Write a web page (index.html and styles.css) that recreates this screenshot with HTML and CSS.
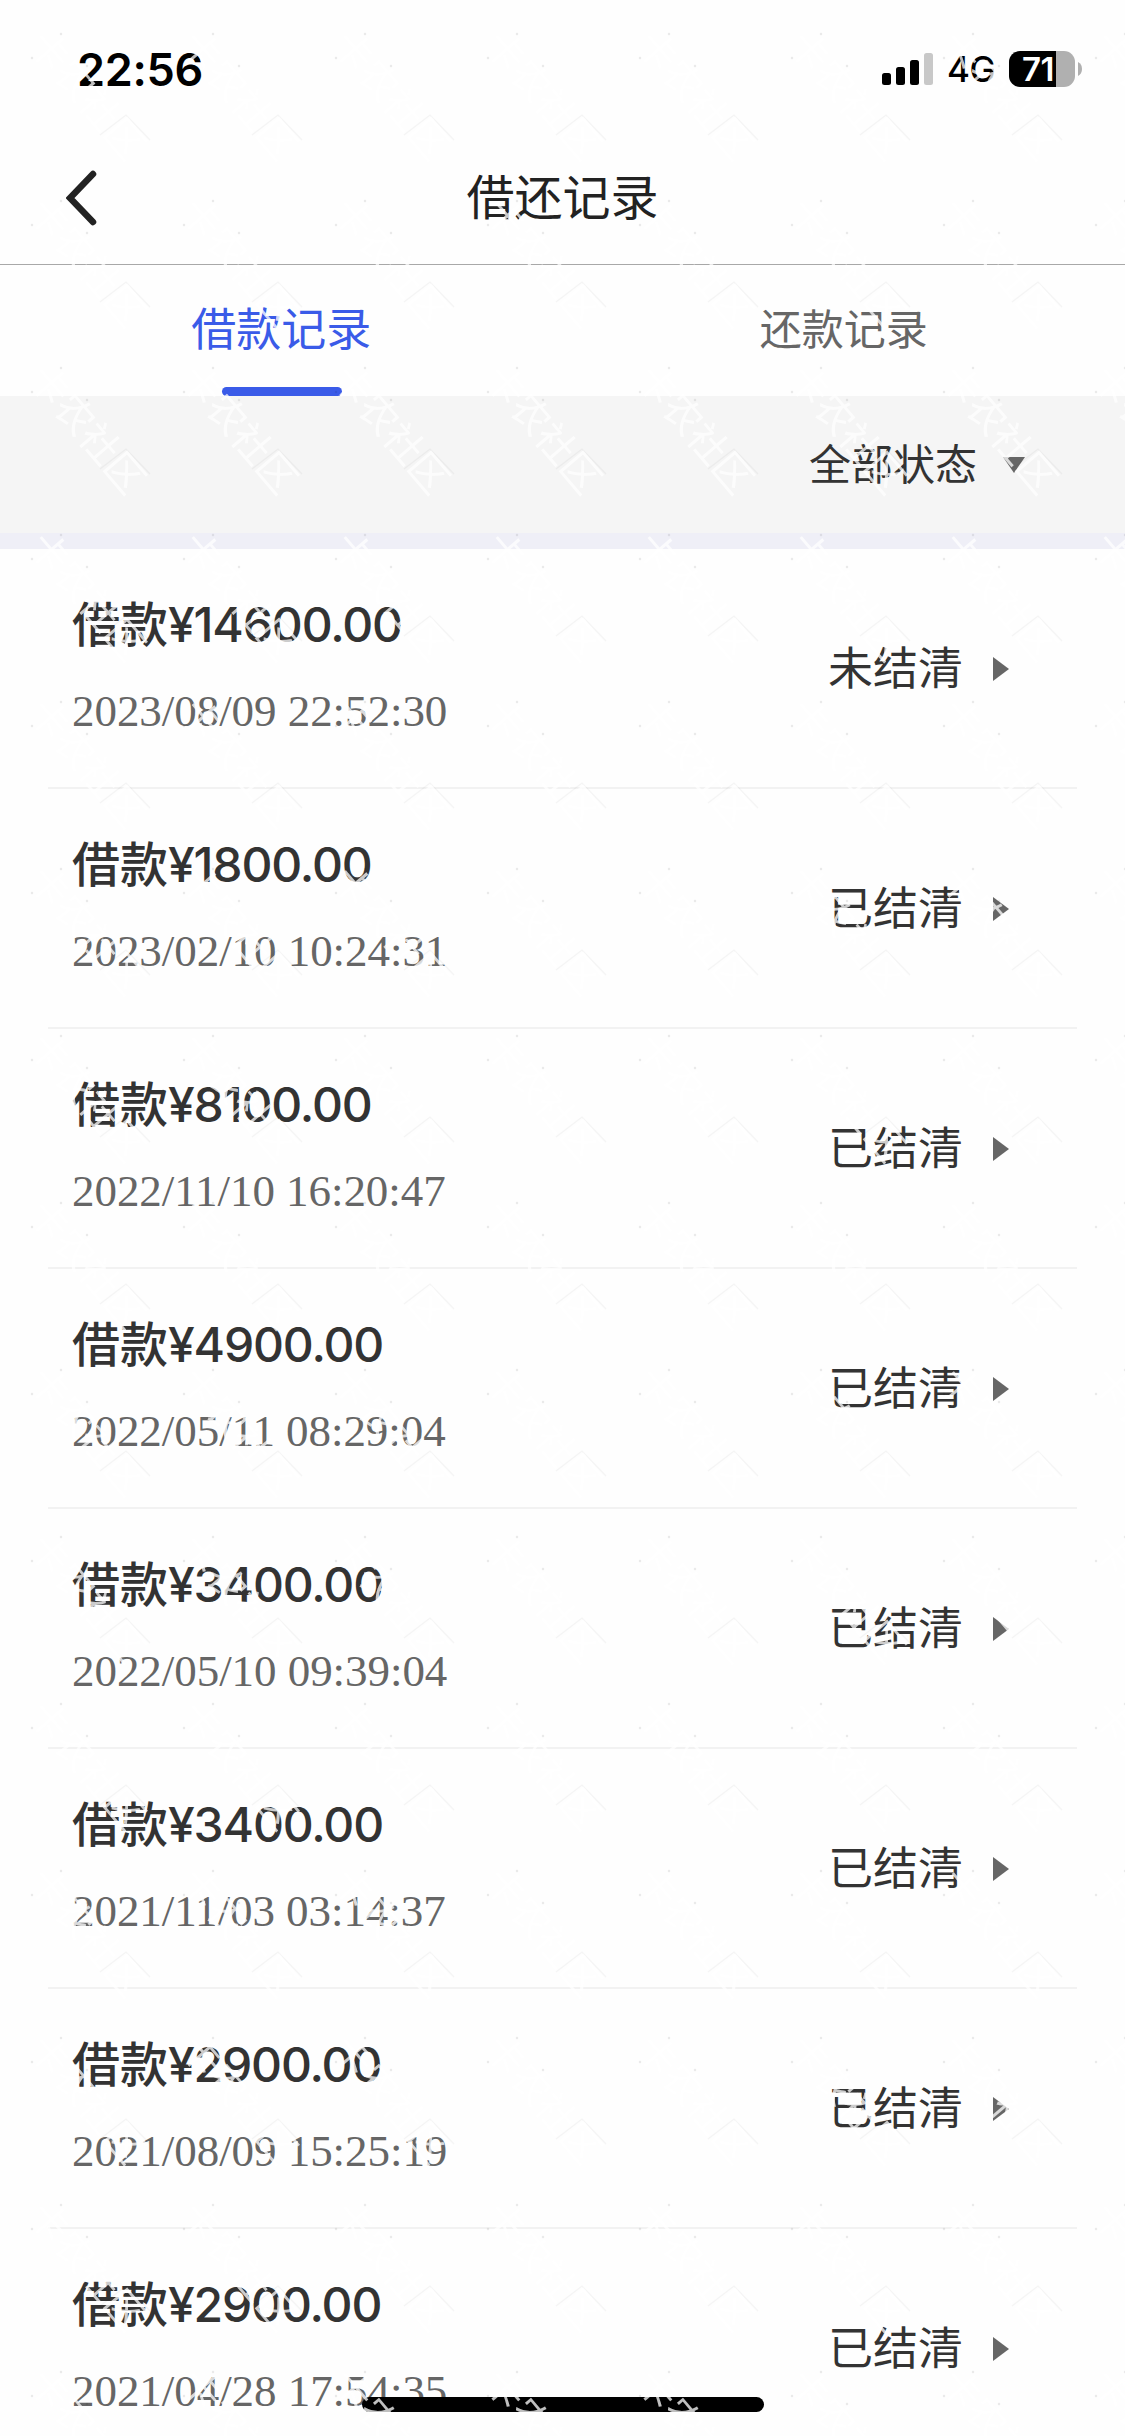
FILE: index.html
```html
<!DOCTYPE html>
<html lang="zh-CN">
<head>
<meta charset="utf-8">
<title>借还记录</title>
<link rel="stylesheet" href="styles.css">
</head>
<body>
<div class="screen">
  <div class="status-bar">
    <span class="clock">22:56</span>
    <div class="indicators">
      <svg class="signal" width="51" height="32" viewBox="0 0 51 32">
        <rect x="0" y="20" width="9" height="12" rx="2.5"/>
        <rect x="14" y="14" width="9" height="18" rx="2.5"/>
        <rect x="28" y="7" width="9" height="25" rx="2.5"/>
        <rect x="42" y="0" width="9" height="32" rx="2.5" fill="#c8c8c8"/>
      </svg>
      <span class="network">4G</span>
      <span class="battery">71</span>
      <svg class="battery-nub" width="4" height="14" viewBox="0 0 4 14"><path d="M0 0Q4 2 4 7T0 14Z" fill="#b0b0b0"/></svg>
    </div>
  </div>
  <header class="nav">
    <svg class="back" width="34" height="56" viewBox="0 0 34 56"><path d="M27 4 4 28 27 52" fill="none" stroke="#222" stroke-width="6.5" stroke-linecap="round"/></svg>
    <h1 class="title">借还记录</h1>
  </header>
  <nav class="tabs">
    <div class="tab active"><span>借款记录</span></div>
    <div class="tab"><span>还款记录</span></div>
  </nav>
  <div class="filter">
    <span>全部状态</span>
    <svg width="22" height="16" viewBox="0 0 22 16"><path d="M0 0H22L11 16Z" fill="#666"/></svg>
  </div>
  <ul class="records">
    <li class="record"><div><div class="amount">借款<span>¥14600.00</span></div><div class="date">2023/08/09 22:52:30</div></div><span class="state">未结清</span><i class="arrow"></i></li>
    <li class="record"><div><div class="amount">借款<span>¥1800.00</span></div><div class="date">2023/02/10 10:24:31</div></div><span class="state">已结清</span><i class="arrow"></i></li>
    <li class="record"><div><div class="amount">借款<span>¥8100.00</span></div><div class="date">2022/11/10 16:20:47</div></div><span class="state">已结清</span><i class="arrow"></i></li>
    <li class="record"><div><div class="amount">借款<span>¥4900.00</span></div><div class="date">2022/05/11 08:29:04</div></div><span class="state">已结清</span><i class="arrow"></i></li>
    <li class="record"><div><div class="amount">借款<span>¥3400.00</span></div><div class="date">2022/05/10 09:39:04</div></div><span class="state">已结清</span><i class="arrow"></i></li>
    <li class="record"><div><div class="amount">借款<span>¥3400.00</span></div><div class="date">2021/11/03 03:14:37</div></div><span class="state">已结清</span><i class="arrow"></i></li>
    <li class="record"><div><div class="amount">借款<span>¥2900.00</span></div><div class="date">2021/08/09 15:25:19</div></div><span class="state">已结清</span><i class="arrow"></i></li>
    <li class="record"><div><div class="amount">借款<span>¥2900.00</span></div><div class="date">2021/04/28 17:54:35</div></div><span class="state">已结清</span><i class="arrow"></i></li>
  </ul>
  <div class="home-indicator"></div>
  <svg class="watermark" width="1125" height="2436" aria-hidden="true">
    <defs>
      <pattern id="mark" x="13" y="15" width="152" height="167" patternUnits="userSpaceOnUse">
        <g fill="#000" fill-opacity=".08"><circle cx="48" cy="19" r="1.2"/><circle cx="19" cy="43" r="1.2"/><circle cx="74" cy="51" r="1.2"/></g>
        <path d="M87 120 113 100 137 125" fill="none" stroke="#000" stroke-opacity=".035" stroke-width="1.3"/>
        <text class="mark-text" transform="translate(74.5 80) rotate(49.5)" text-anchor="middle" y="14">卡农社区</text>
      </pattern>
    </defs>
    <rect width="1125" height="2436" fill="url(#mark)"/>
  </svg>
</div>
</body>
</html>
```
FILE: styles.css
```css
* { box-sizing: border-box; }
body {
  margin: 0;
  background: #fefefe;
  font-family: Inter, "Noto Sans CJK SC", sans-serif;
}
.screen {
  position: relative;
  width: 1125px;
  height: 2436px;
  overflow: hidden;
  display: flex;
  flex-direction: column;
}
.status-bar {
  height: 132px;
  flex: none;
  display: flex;
  justify-content: space-between;
  align-items: flex-start;
  padding: 51px 43px 0 77px;
}
.clock {
  font-size: 45px;
  line-height: 37px;
  font-weight: 600;
  letter-spacing: -.3px;
}
.indicators {
  display: flex;
  align-items: center;
  height: 36px;
}
.network {
  width: 49px;
  margin-left: 14px;
  font-size: 35px;
  font-weight: 500;
  line-height: 38px;
  letter-spacing: -.5px;
  white-space: nowrap;
}
.battery {
  width: 66px;
  height: 36px;
  margin-left: 13px;
  padding-left: 13px;
  border-radius: 11px;
  background: linear-gradient(90deg, #000 47px, #b0b0b0 47px);
  color: #fff;
  font-size: 33px;
  font-weight: 600;
  line-height: 36px;
  letter-spacing: -.5px;
}
.battery-nub { margin-left: 3px; }
.nav {
  height: 133px;
  flex: none;
  display: grid;
  grid-template-columns: 100px 1fr 100px;
  align-items: center;
  border-bottom: 1px solid #a8a8a8;
}
.back { justify-self: end; }
.title {
  margin: 0;
  text-align: center;
  font-size: 48px;
  font-weight: 400;
  line-height: 60px;
  color: #222;
}
.tabs {
  height: 131px;
  flex: none;
  display: grid;
  grid-template-columns: 1fr 1fr;
}
.tab {
  display: flex;
  flex-direction: column;
  align-items: center;
  justify-content: space-between;
  font-size: 42px;
  line-height: 130px;
  color: #666;
}
.tab.active {
  padding-top: 4px;
  font-size: 45px;
  line-height: 118px;
  color: #3a5be8;
}
.tab.active span { padding-top: 2px; }
.tab.active::after {
  content: "";
  width: 120px;
  height: 9px;
  margin-left: 2px;
  flex: none;
  border-radius: 5px;
  background: #3a5be8;
}
.tab.active span { height: 118px; }
.filter {
  height: 153px;
  flex: none;
  display: flex;
  align-items: center;
  justify-content: flex-end;
  gap: 26px;
  padding-right: 100px;
  border-bottom: 16px solid #efeff7;
  background: #f5f5f5;
  font-size: 42px;
  line-height: 60px;
  color: #333;
}
.records {
  margin: 0;
  padding: 0 48px;
  list-style: none;
}
.record {
  height: 240px;
  display: grid;
  grid-template-columns: 1fr 135px 16px;
  column-gap: 30px;
  align-items: center;
  padding: 1px 68px 0 24px;
  border-bottom: 2px solid #f2f2f2;
}
.amount {
  font-size: 48px;
  line-height: 72px;
  font-weight: 500;
  color: #333;
}
.amount span { letter-spacing: -1.15px; }
.date {
  margin: 20px 0 8px;
  font-family: "Liberation Serif", serif;
  font-size: 45px;
  line-height: 60px;
  letter-spacing: -.05px;
  color: #666;
}
.state {
  padding-top: 1px;
  font-size: 45px;
  line-height: 60px;
  color: #333;
}
.arrow {
  width: 16px;
  height: 24px;
  margin-top: 1px;
  background: #666;
  clip-path: polygon(0 0, 100% 50%, 0 100%);
}
.home-indicator {
  position: absolute;
  left: 362px;
  top: 2397px;
  width: 402px;
  height: 15px;
  border-radius: 8px;
  background: #000;
}
.watermark {
  position: absolute;
  left: 0;
  top: 0;
}
.mark-text {
  font-family: "Noto Sans CJK SC", sans-serif;
  font-size: 38.5px;
  fill: #fff;
  fill-opacity: .75;
}
```
